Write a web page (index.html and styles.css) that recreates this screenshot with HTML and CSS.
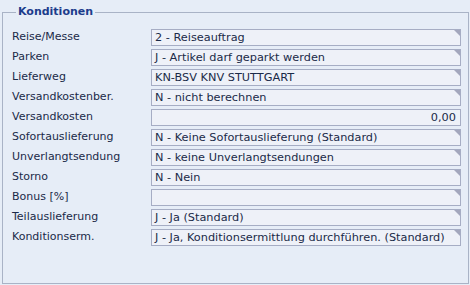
FILE: index.html
```html
<!DOCTYPE html>
<html>
<head>
<meta charset="utf-8">
<link rel="stylesheet" href="styles.css">
</head>
<body>
<fieldset class="panel">
  <legend class="title">Konditionen</legend>
  <div class="grid">
    <div class="lbl">Reise/Messe</div><div class="fld dd">2 - Reiseauftrag</div>
    <div class="lbl">Parken</div><div class="fld dd">J - Artikel darf geparkt werden</div>
    <div class="lbl">Lieferweg</div><div class="fld dd">KN-BSV KNV STUTTGART</div>
    <div class="lbl">Versandkostenber.</div><div class="fld dd">N - nicht berechnen</div>
    <div class="lbl">Versandkosten</div><div class="fld num">0,00</div>
    <div class="lbl">Sofortauslieferung</div><div class="fld dd">N - Keine Sofortauslieferung (Standard)</div>
    <div class="lbl">Unverlangtsendung</div><div class="fld dd">N - keine Unverlangtsendungen</div>
    <div class="lbl">Storno</div><div class="fld dd">N - Nein</div>
    <div class="lbl">Bonus [%]</div><div class="fld dd"></div>
    <div class="lbl">Teilauslieferung</div><div class="fld dd">J - Ja (Standard)</div>
    <div class="lbl">Konditionserm.</div><div class="fld dd">J - Ja, Konditionsermittlung durchführen. (Standard)</div>
  </div>
</fieldset>
</body>
</html>
```
FILE: styles.css
```css
html, body {
  margin: 0;
  padding: 0;
  width: 470px;
  height: 285px;
  background: #e6edf7;
  font-family: "DejaVu Sans", Verdana, sans-serif;
  font-size: 11px;
  color: #1a2a48;
  overflow: hidden;
}
.panel {
  box-sizing: border-box;
  margin: 6px 1px 1px 2px;
  height: 278px;
  border: 1px solid #a9b3c6;
  padding: 11px 6px 0 8px;
}
.title {
  font-weight: bold;
  color: #1c3c8c;
  padding: 0 2px;
  margin-left: 5px;
  font-size: 11px;
  line-height: 12px;
}
.grid {
  display: grid;
  grid-template-columns: 140px 310px;
  row-gap: 3px;
}
.lbl {
  height: 17px;
  line-height: 16px;
  padding-left: 1px;
  white-space: nowrap;
}
.fld {
  position: relative;
  box-sizing: border-box;
  height: 17px;
  line-height: 15px;
  font-size: 11.3px;
  border: 1px solid #a6adc4;
  background: #eef1f8;
  padding: 0 4px 0 3px;
  white-space: nowrap;
  overflow: hidden;
}
.fld.dd::after {
  content: "";
  position: absolute;
  top: 0;
  right: 0;
  width: 0;
  height: 0;
  border-top: 6px solid #a3a7bd;
  border-left: 6px solid transparent;
}
.num { text-align: right; }
```
